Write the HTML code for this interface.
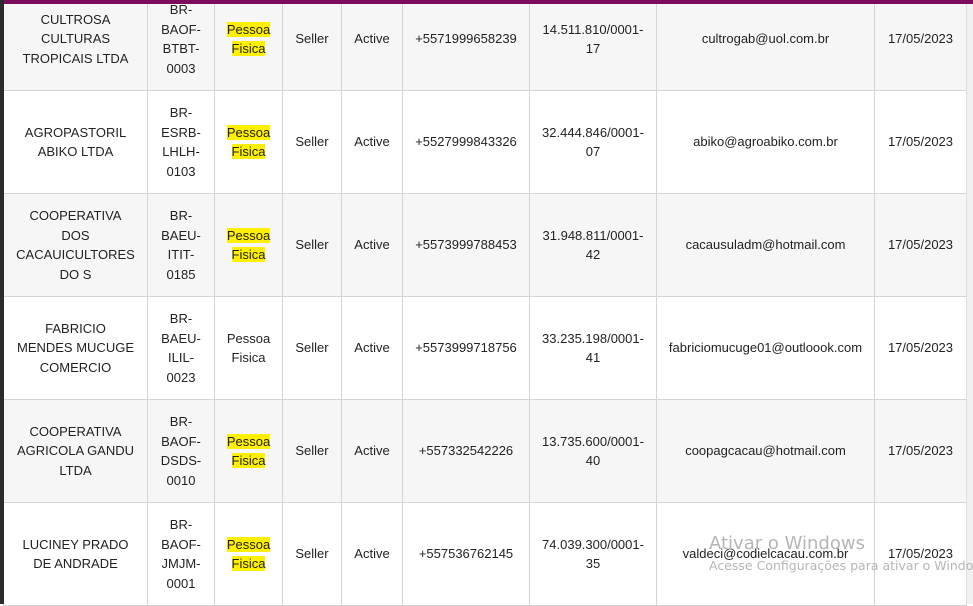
<!DOCTYPE html>
<html><head><meta charset="utf-8"><style>
html,body{margin:0;padding:0;width:973px;height:604px;overflow:hidden;background:#fff;font-family:"Liberation Sans",Arial,sans-serif;}
.left{position:absolute;left:0;top:0;width:4px;height:604px;background:#2b2b2b;z-index:3}
.top{position:absolute;left:0;top:0;width:973px;height:4px;background:#7b0c5c;z-index:3}
.right{position:absolute;left:966px;top:0;width:7px;height:604px;background:#f1f1f1;border-left:1px solid #ddd;z-index:2}
table{position:absolute;left:3px;top:-13px;border-collapse:collapse;table-layout:fixed;font-size:13px;color:#222;}
td{border:1px solid #d4d4d4;text-align:center;vertical-align:middle;height:103px;padding:0 6px;line-height:19.5px;box-sizing:border-box;}
td:first-child{padding:0 12px}
tr:nth-child(odd) td{background:#f6f6f6}
.h{background:#ffef00;}
.wm{position:absolute;left:709px;top:535px;color:#b5b5b5;z-index:4;white-space:nowrap;font-family:"DejaVu Sans",sans-serif}
.wm1{font-size:18px;top:533px}
.wm2{font-size:12.5px;top:558px}
</style></head><body>
<div class="top"></div><div class="left"></div><div class="right"></div>
<table>
<colgroup><col style="width:144px"><col style="width:67px"><col style="width:68px"><col style="width:59px"><col style="width:61px"><col style="width:127px"><col style="width:127px"><col style="width:218px"><col style="width:92px"></colgroup>
<tr><td>CULTROSA CULTURAS TROPICAIS LTDA</td><td>BR-<br>BAOF-<br>BTBT-<br>0003</td><td><span class="h">Pessoa</span><br><span class="h">Fisica</span></td><td>Seller</td><td>Active</td><td>+5571999658239</td><td>14.511.810/0001-17</td><td>cultrogab@uol.com.br</td><td>17/05/2023</td></tr>
<tr><td>AGROPASTORIL ABIKO LTDA</td><td>BR-<br>ESRB-<br>LHLH-<br>0103</td><td><span class="h">Pessoa</span><br><span class="h">Fisica</span></td><td>Seller</td><td>Active</td><td>+5527999843326</td><td>32.444.846/0001-07</td><td>abiko@agroabiko.com.br</td><td>17/05/2023</td></tr>
<tr><td>COOPERATIVA<br>DOS<br>CACAUICULTORES<br>DO S</td><td>BR-<br>BAEU-<br>ITIT-<br>0185</td><td><span class="h">Pessoa</span><br><span class="h">Fisica</span></td><td>Seller</td><td>Active</td><td>+5573999788453</td><td>31.948.811/0001-42</td><td>cacausuladm@hotmail.com</td><td>17/05/2023</td></tr>
<tr><td>FABRICIO<br>MENDES MUCUGE<br>COMERCIO</td><td>BR-<br>BAEU-<br>ILIL-<br>0023</td><td>Pessoa<br>Fisica</td><td>Seller</td><td>Active</td><td>+5573999718756</td><td>33.235.198/0001-41</td><td>fabriciomucuge01@outloook.com</td><td>17/05/2023</td></tr>
<tr><td>COOPERATIVA<br>AGRICOLA GANDU<br>LTDA</td><td>BR-<br>BAOF-<br>DSDS-<br>0010</td><td><span class="h">Pessoa</span><br><span class="h">Fisica</span></td><td>Seller</td><td>Active</td><td>+557332542226</td><td>13.735.600/0001-40</td><td>coopagcacau@hotmail.com</td><td>17/05/2023</td></tr>
<tr><td>LUCINEY PRADO<br>DE ANDRADE</td><td>BR-<br>BAOF-<br>JMJM-<br>0001</td><td><span class="h">Pessoa</span><br><span class="h">Fisica</span></td><td>Seller</td><td>Active</td><td>+557536762145</td><td>74.039.300/0001-35</td><td>valdeci@codielcacau.com.br</td><td>17/05/2023</td></tr>
</table>
<div class="wm wm1">Ativar o Windows</div>
<div class="wm wm2">Acesse Configurações para ativar o Windows</div>
</body></html>
